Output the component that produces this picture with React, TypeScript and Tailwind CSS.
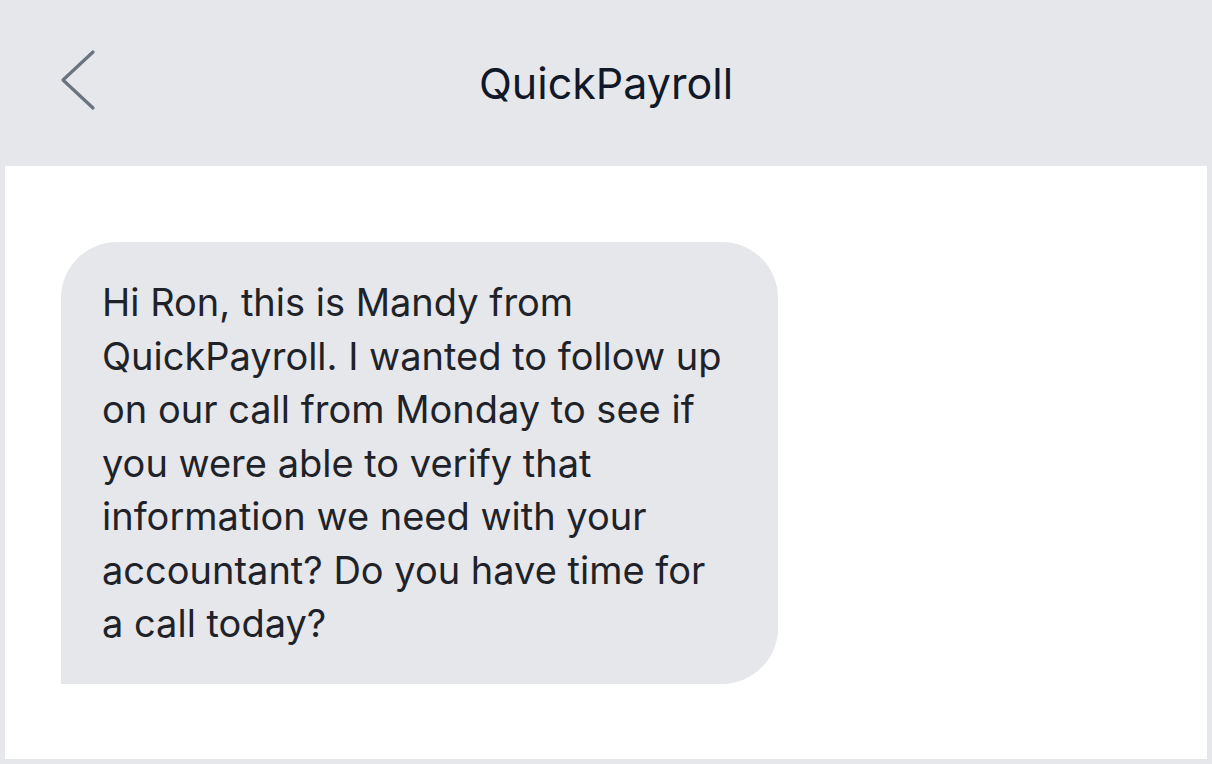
const lines = [
  "Hi Ron, this is Mandy from",
  "QuickPayroll. I wanted to follow up",
  "on our call from Monday to see if",
  "you were able to verify that",
  "information we need with your",
  "accountant? Do you have time for",
  "a call today?",
]

export default function App() {
  return (
    <div className="w-[1212px] h-[764px] bg-[#e5e7eb] flex flex-col font-['Inter',sans-serif]">
      {/* Header */}
      <header className="relative h-[166px] flex items-center justify-center shrink-0">
        <button className="absolute left-[58px] top-[46px] w-[42px] h-[68px] flex items-center justify-center">
          <svg width="42" height="68" viewBox="0 0 42 68" fill="none">
            <path d="M35 6 L5 34 L35 62" stroke="#6b7280" strokeWidth="3.2" strokeLinecap="round" strokeLinejoin="round" />
          </svg>
        </button>
        <h1 className="text-[43px] text-[#111827]">QuickPayroll</h1>
      </header>

      {/* Conversation */}
      <main className="mx-[5px] mb-[5px] flex-1 bg-white pt-[76px] pl-[56px]">
        <div className="w-[717px] h-[442px] bg-[#e5e7eb] rounded-tl-[56px] rounded-tr-[56px] rounded-br-[56px] pl-[41px] pt-[34px]">
          <p className="text-[38px] leading-[53.5px] text-[#1f2329]">
            {lines.map((line, i) => (
              <span key={i} className="block whitespace-nowrap">{line}</span>
            ))}
          </p>
        </div>
      </main>
    </div>
  )
}
